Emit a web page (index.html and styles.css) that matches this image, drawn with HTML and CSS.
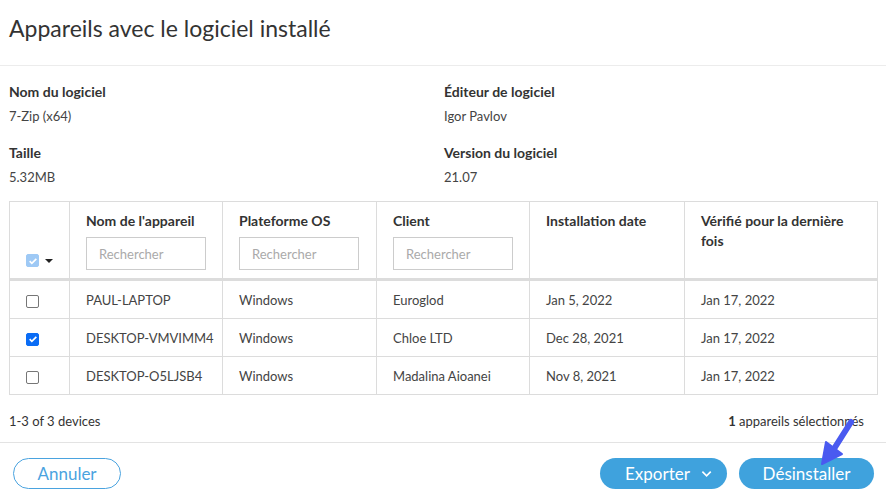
FILE: index.html
```html
<!DOCTYPE html>
<html lang="fr">
<head>
    <meta charset="UTF-8">
    <title>Appareils avec le logiciel installé</title>
    <link rel="stylesheet" href="styles.css">
</head>
<body>
    <div class="modal">
        <header class="modal-header">
            <h1>Appareils avec le logiciel installé</h1>
        </header>

        <div class="info-grid">
            <div class="info-item">
                <div class="info-label">Nom du logiciel</div>
                <div class="info-value">7-Zip (x64)</div>
            </div>
            <div class="info-item">
                <div class="info-label">Éditeur de logiciel</div>
                <div class="info-value">Igor Pavlov</div>
            </div>
            <div class="info-item">
                <div class="info-label">Taille</div>
                <div class="info-value">5.32MB</div>
            </div>
            <div class="info-item">
                <div class="info-label">Version du logiciel</div>
                <div class="info-value">21.07</div>
            </div>
        </div>

        <table class="devices">
            <thead>
                <tr>
                    <th class="col-check">
                        <span class="check-all">
                            <span class="box box-light">
                                <svg viewBox="0 0 12 12" width="10" height="10"><path d="M2 6.2l2.6 2.6L10 3.4" fill="none" stroke="#fff" stroke-width="2"/></svg>
                            </span>
                            <span class="caret"></span>
                        </span>
                    </th>
                    <th class="col-name">Nom de l'appareil<input type="text" placeholder="Rechercher"></th>
                    <th class="col-os">Plateforme OS<input type="text" placeholder="Rechercher"></th>
                    <th class="col-client">Client<input type="text" placeholder="Rechercher"></th>
                    <th class="col-date">Installation date</th>
                    <th class="col-last">Vérifié pour la dernière fois</th>
                </tr>
            </thead>
            <tbody>
                <tr>
                    <td class="col-check"><span class="box"></span></td>
                    <td>PAUL-LAPTOP</td>
                    <td>Windows</td>
                    <td>Euroglod</td>
                    <td>Jan 5, 2022</td>
                    <td>Jan 17, 2022</td>
                </tr>
                <tr>
                    <td class="col-check">
                        <span class="box box-checked">
                            <svg viewBox="0 0 12 12" width="10" height="10"><path d="M2 6.2l2.6 2.6L10 3.4" fill="none" stroke="#fff" stroke-width="2"/></svg>
                        </span>
                    </td>
                    <td>DESKTOP-VMVIMM4</td>
                    <td>Windows</td>
                    <td>Chloe LTD</td>
                    <td>Dec 28, 2021</td>
                    <td>Jan 17, 2022</td>
                </tr>
                <tr>
                    <td class="col-check"><span class="box"></span></td>
                    <td>DESKTOP-O5LJSB4</td>
                    <td>Windows</td>
                    <td>Madalina Aioanei</td>
                    <td>Nov 8, 2021</td>
                    <td>Jan 17, 2022</td>
                </tr>
            </tbody>
        </table>

        <div class="table-footer">
            <span>1-3 of 3 devices</span>
            <span class="selected"><strong>1</strong> appareils sélectionnés</span>
        </div>

        <footer class="modal-footer">
            <button class="btn btn-outline">Annuler</button>
            <div class="actions">
                <button class="btn btn-primary btn-export">Exporter
                    <svg viewBox="0 0 12 8" width="12" height="8"><path d="M1.5 1.5L6 6l4.5-4.5" fill="none" stroke="#fff" stroke-width="1.8"/></svg>
                </button>
                <button class="btn btn-primary btn-uninstall">Désinstaller</button>
            </div>
            <svg class="pointer" viewBox="0 0 40 50" width="40" height="50">
                <path d="M33 4L14 34" stroke="#4a5af0" stroke-width="6" stroke-linecap="round" fill="none"/>
                <path d="M4 46L8 24L24 36Z" fill="#4a5af0" stroke="#4a5af0" stroke-width="2" stroke-linejoin="round"/>
            </svg>
        </footer>
    </div>
</body>
</html>
```

FILE: styles.css
```css
body {
    margin: 0;
    font-family: Lato, 'Noto Sans', Arial, sans-serif;
    color: #333;
    background: #fff;
}

.modal {
    width: 886px;
    height: 498px;
    position: relative;
    overflow: hidden;
}

.modal-header {
    height: 65px;
    padding: 0 9px;
    border-bottom: 1px solid #ececec;
    display: flex;
    align-items: center;
}

h1 {
    margin: 0;
    margin-top: -10px;
    font-size: 23px;
    font-weight: 400;
    color: #333;
}

.info-grid {
    display: grid;
    grid-template-columns: 435px 1fr;
    padding: 17px 9px 0;
    row-gap: 20px;
}

.info-label {
    font-size: 14px;
    font-weight: 700;
    color: #333;
}

.info-value {
    margin-top: 8px;
    font-size: 13px;
    color: #444;
}

.devices {
    margin: 16px 8px 0 9px;
    width: 869px;
    border-collapse: collapse;
    font-size: 13px;
    table-layout: fixed;
}

.devices th,
.devices td {
    border: 1px solid #dcdcdc;
    text-align: left;
    padding: 0 16px;
    white-space: nowrap;
}

.devices th {
    vertical-align: top;
    padding-top: 9px;
    padding-bottom: 8px;
    font-size: 14px;
    font-weight: 700;
    color: #333;
    line-height: 20px;
    border-bottom: 3px solid #dcdcdc;
}

.devices th.col-last {
    white-space: normal;
}

.devices td {
    height: 37px;
    color: #444;
}

.col-check { width: 27px; }
.col-name { width: 120px; }
.col-os { width: 121px; }
.col-client { width: 120px; }
.col-date { width: 122px; }

.devices th.col-check {
    vertical-align: bottom;
    padding-bottom: 11px;
}

.devices input {
    display: block;
    box-sizing: border-box;
    width: 120px;
    height: 33px;
    margin-top: 6px;
    padding: 0 12px;
    border: 1px solid #ccc;
    font-family: inherit;
    font-size: 13px;
}

.devices input::placeholder {
    color: #aaa;
}

.check-all {
    display: flex;
    align-items: center;
    gap: 6px;
}

.box {
    display: inline-flex;
    align-items: center;
    justify-content: center;
    box-sizing: border-box;
    width: 13px;
    height: 13px;
    border: 1px solid #767676;
    border-radius: 2px;
    vertical-align: middle;
}

.box-checked {
    background: #0a6cf5;
    border-color: #0a6cf5;
}

.box-light {
    background: #9ec9f5;
    border-color: #9ec9f5;
}

.caret {
    width: 0;
    height: 0;
    border-left: 4px solid transparent;
    border-right: 4px solid transparent;
    border-top: 4px solid #222;
}

.table-footer {
    display: flex;
    justify-content: space-between;
    padding: 18px 22px 13px 9px;
    font-size: 13px;
    color: #333;
    border-bottom: 1px solid #e3e3e3;
}

.modal-footer {
    display: flex;
    justify-content: space-between;
    align-items: center;
    padding: 15px 12px 0 13px;
}

.actions {
    display: flex;
    gap: 12px;
}

.btn {
    height: 31px;
    border-radius: 16px;
    font-family: inherit;
    font-size: 17px;
    padding: 0 24px;
    display: inline-flex;
    align-items: center;
    gap: 14px;
}

.btn-outline {
    width: 108px;
    justify-content: center;
    background: #fff;
    border: 1px solid #4aa3df;
    color: #4aa3df;
}

.btn-primary {
    background: #3fa2dd;
    border: none;
    color: #fff;
}

.btn-export {
    width: 127px;
    padding: 0 15px 0 25px;
    gap: 11px;
}

.btn-uninstall {
    width: 135px;
    justify-content: center;
}

.pointer {
    position: absolute;
    right: 28px;
    bottom: 30px;
}
```
